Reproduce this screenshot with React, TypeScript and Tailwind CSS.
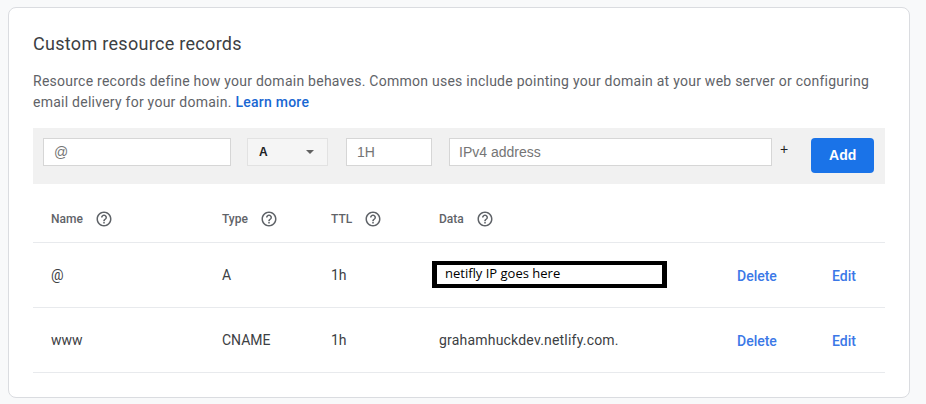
import React from "react";

function Help() {
  return (
    <svg width="18" height="18" viewBox="0 0 24 24" className="ml-[12px] shrink-0" fill="#5f6368">
      <path d="M11 18h2v-2h-2v2zm1-16C6.48 2 2 6.48 2 12s4.48 10 10 10 10-4.48 10-10S17.52 2 12 2zm0 18c-4.41 0-8-3.59-8-8s3.59-8 8-8 8 3.59 8 8-3.59 8-8 8zm0-14c-2.21 0-4 1.79-4 4h2c0-1.1.9-2 2-2s2 .9 2 2c0 2-3 1.75-3 5h2c0-2.25 3-2.5 3-5 0-2.21-1.79-4-4-4z" />
    </svg>
  );
}

const cols = "grid grid-cols-[171px_109px_108px_298px_95px_1fr] pl-[18px]";

export default function App() {
  return (
    <div className="min-h-[404px] bg-[#f8f9fa] pt-[7px] pl-[8px] pr-[16px] pb-[6px] font-['Roboto',sans-serif]">
      <div className="w-[902px] h-[391px] bg-white border border-[#dadce0] rounded-[8px] px-[24px] pt-[24px]">
        <h2 className="text-[18px] leading-[24px] tracking-[0.3px] text-[#3c4043]">Custom resource records</h2>
        <p className="mt-[15px] text-[14px] leading-[21px] tracking-[0.25px] text-[#5f6368]">
          Resource records define how your domain behaves. Common uses include pointing your domain at your web server or configuring email delivery for your domain.{" "}
          <span className="text-[#1967d2] font-medium">Learn more</span>
        </p>
        <div className="mt-[15px] h-[56px] bg-[#f1f1f1] px-[10px] pt-[10px] flex items-start font-['Liberation_Sans',sans-serif]">
          <div className="w-[188px] h-[28px] bg-white border border-[#d6d6d6] flex items-center px-[10px] text-[14px] text-[#757575]">@</div>
          <div className="ml-[16px] w-[81px] h-[28px] bg-[#f5f5f5] border border-[#e2e2e2] flex items-center px-[11px] justify-between">
            <span className="text-[12px] font-bold text-[#202124]">A</span>
            <span className="w-0 h-0 border-l-[4px] border-r-[4px] border-t-[4px] border-l-transparent border-r-transparent border-t-[#616161] mr-[2px]" />
          </div>
          <div className="ml-[18px] w-[86px] h-[28px] bg-white border border-[#d6d6d6] flex items-center px-[10px] text-[14px] text-[#757575]">1H</div>
          <div className="ml-[17px] w-[323px] h-[28px] bg-white border border-[#d6d6d6] flex items-center px-[9px] text-[14px] text-[#757575]">IPv4 address</div>
          <span className="ml-[8px] mt-[3px] text-[14px] text-[#202124] leading-[16px]">+</span>
          <button className="ml-[23px] w-[63px] h-[35px] bg-[#1a73e8] rounded-[4px] text-white text-[14px] font-bold">Add</button>
        </div>
        <div className={`${cols} h-[59px] pt-[12px] items-center border-b border-[#e8eaed] text-[12px] font-medium text-[#5f6368]`}>
          <div className="flex items-center">Name<Help /></div>
          <div className="flex items-center">Type<Help /></div>
          <div className="flex items-center">TTL<Help /></div>
          <div className="flex items-center">Data<Help /></div>
          <div />
          <div />
        </div>
        <div className={`${cols} h-[65px] items-center border-b border-[#e8eaed] text-[14px] text-[#3c4043]`}>
          <div>@</div>
          <div>A</div>
          <div>1h</div>
          <div className="-ml-[7px] mt-[-2px]">
            <div className="w-[235px] h-[27px] border-x-[5px] border-y-[4px] border-black flex items-center pl-[8px] font-['Open_Sans',sans-serif] text-[13px] text-black">netifly IP goes here</div>
          </div>
          <div className="text-[#3b78e7] font-medium mt-[2px]">Delete</div>
          <div className="text-[#3b78e7] font-medium mt-[2px]">Edit</div>
        </div>
        <div className={`${cols} h-[65px] items-center border-b border-[#e8eaed] text-[14px] text-[#3c4043]`}>
          <div>www</div>
          <div>CNAME</div>
          <div>1h</div>
          <div className="tracking-[0.2px]">grahamhuckdev.netlify.com.</div>
          <div className="text-[#3b78e7] font-medium mt-[2px]">Delete</div>
          <div className="text-[#3b78e7] font-medium mt-[2px]">Edit</div>
        </div>
      </div>
    </div>
  );
}
